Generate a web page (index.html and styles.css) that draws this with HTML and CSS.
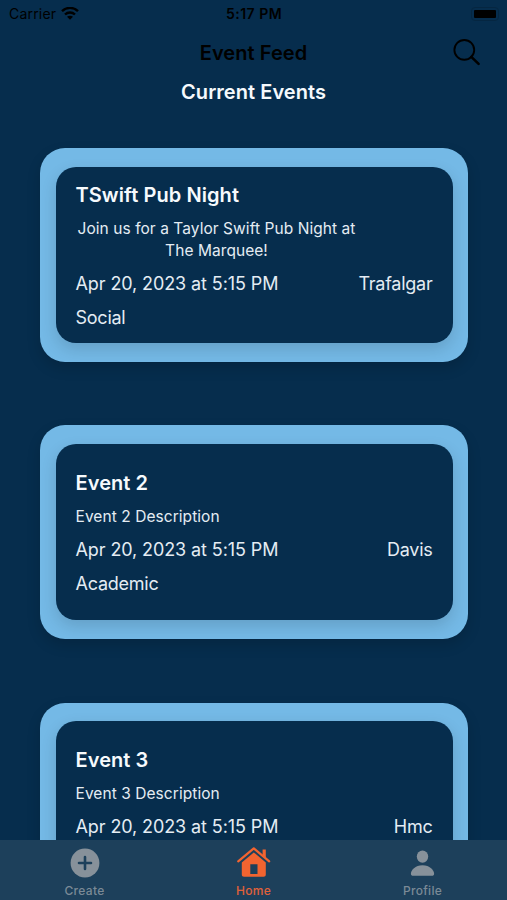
FILE: index.html
```
<!DOCTYPE html>
<html lang="en">
	<head>
		<meta charset="utf-8">
		<title>Event Feed</title>
		<link rel="stylesheet" href="styles.css">
	</head>
	<body>
		<div class="status-bar">
			<div class="carrier">
				<span>Carrier</span>
				<svg width="18" height="14" viewBox="0 0 18 14" fill="none" stroke="#000" stroke-width="2.4">
					<path d="M1 4.2C5.4 -.2 12.6 -.2 17 4.2"/>
					<path d="M4 7.5c2.8-2.7 7.200-2.7 10 0"/>
					<path d="M9 12.800l-3-3c1.700-1.500 4.300-1.500 6 0z" fill="#000" stroke="none"/>
				</svg>
			</div>
			<div class="time">5:17 PM</div>
			<div class="battery"><div class="battery-level"></div></div>
		</div>

		<header class="nav-bar">
			<h1>Event Feed</h1>
			<svg class="search" width="28" height="28" viewBox="0 0 28 28" fill="none" stroke="#000">
				<circle cx="11.3" cy="11.9" r="9.9" stroke-width="1.9"/>
				<path d="M18.3 18.9l7.3 7" stroke-width="2.6" stroke-linecap="round"/>
			</svg>
		</header>

		<h2>Current Events</h2>

		<main class="feed">
			<div class="card">
				<div class="card-inner">
					<h3>TSwift Pub Night</h3>
					<p class="description">Join us for a Taylor Swift Pub Night at The Marquee!</p>
					<div class="row">
						<span>Apr 20, 2023 at 5:15 PM</span>
						<span class="tag">Trafalgar</span>
					</div>
					<div class="row"><span class="tag">Social</span></div>
				</div>
			</div>
			<div class="card">
				<div class="card-inner">
					<h3>Event 2</h3>
					<p class="description">Event 2 Description</p>
					<div class="row">
						<span>Apr 20, 2023 at 5:15 PM</span>
						<span class="tag">Davis</span>
					</div>
					<div class="row"><span class="tag">Academic</span></div>
				</div>
			</div>
			<div class="card">
				<div class="card-inner">
					<h3>Event 3</h3>
					<p class="description">Event 3 Description</p>
					<div class="row">
						<span>Apr 20, 2023 at 5:15 PM</span>
						<span class="tag">Hmc</span>
					</div>
				</div>
			</div>
		</main>

		<nav class="tab-bar">
			<div class="tab">
				<svg width="36" height="34" viewBox="0 0 36 34">
					<circle cx="18" cy="17" r="14.4" fill="#87919a"/>
					<path d="M18 11v12M12 17h12" stroke="#1d405b" stroke-width="2.6" stroke-linecap="round"/>
				</svg>
				<span>Create</span>
			</div>
			<div class="tab tab-active">
				<svg width="36" height="34" viewBox="0 0 36 34">
					<path d="M2.2 15.4L17.8 2.4l15.400 13" fill="none" stroke="#f26430" stroke-width="2.2" stroke-linecap="round" stroke-linejoin="round"/>
					<path d="M26.6 3.6h3.200v8.400l-3.200-2.800z" fill="#f26430"/>
					<path fill-rule="evenodd" d="M17.8 6.4L5.8 16.4v12.200c0 1.400.9 2.200 2.200 2.200h19.600c1.300 0 2.200-.8 2.200-2.200v-12.200zM14.300 18.200h7.200v9.800h-7.200z" fill="#f26430"/>
				</svg>
				<span>Home</span>
			</div>
			<div class="tab">
				<svg width="36" height="34" viewBox="0 0 36 34" fill="#87919a">
					<ellipse cx="17.5" cy="10.6" rx="5.7" ry="6.1"/>
					<path d="M8.300 29.800c-1.600 0-2.400-.8-2.400-2.100 0-3.600 4.400-8.500 11.600-8.500s11.600 4.900 11.600 8.500c0 1.300-.8 2.100-2.400 2.100z"/>
				</svg>
				<span>Profile</span>
			</div>
		</nav>
	</body>
</html>
```

FILE: styles.css
```
* {
	box-sizing: border-box;
}

body {
	margin: 0;
	height: 900px;
	overflow: hidden;
	display: flex;
	flex-direction: column;
	background: #062d4d;
	color: #e4ecf3;
	font-family: 'Inter', 'Liberation Sans', sans-serif;
}

h1, h2, h3, p {
	margin: 0;
}

.status-bar {
	display: grid;
	grid-template-columns: 1fr auto 1fr;
	align-items: center;
	height: 27px;
	padding: 0 8px 0 9px;
	color: #000;
	font-size: 14px;
	flex-shrink: 0;
}

.carrier {
	display: flex;
	align-items: center;
	gap: 5px;
	letter-spacing: 0.2px;
}

.time {
	font-weight: 600;
	letter-spacing: 0.5px;
}

.battery {
	justify-self: end;
	padding: 2px;
	border: 1px solid #052641;
	border-radius: 4px;
}

.battery-level {
	width: 22px;
	height: 8px;
	border-radius: 1px;
	background: #000;
}

.nav-bar {
	display: grid;
	grid-template-columns: 1fr auto 1fr;
	align-items: center;
	height: 50px;
	flex-shrink: 0;
	padding: 0 26px;
	color: #000;
}

.nav-bar h1 {
	grid-column: 2;
	padding-top: 1px;
	font-size: 20px;
	font-weight: 600;
	letter-spacing: 0.05px;
}

.search {
	justify-self: end;
}

h2 {
	text-align: center;
	font-size: 20px;
	line-height: 30px;
	font-weight: 600;
	letter-spacing: 0.05px;
	color: #f6fafd;
}

.feed {
	display: flex;
	flex-direction: column;
	gap: 63.7px;
	padding: 41.3px 39.5px 0 40px;
	flex: 1;
	min-height: 0;
	overflow: hidden;
}

.card {
	flex-shrink: 0;
	height: 213.5px;
	padding: 18.5px 15px 18.5px 15.5px;
	border-radius: 25px;
	background: #74b9e6;
	box-shadow: 0 6px 14px rgba(0, 0, 0, 0.15);
}

.card-inner {
	display: flex;
	flex-direction: column;
	justify-content: center;
	align-items: flex-start;
	gap: 10px;
	height: 100%;
	padding: 1px 20px 0;
	border-radius: 20px;
	background: #062d4d;
	box-shadow: 0 6px 16px rgba(0, 0, 0, 0.14);
}

.card:last-child .card-inner {
	justify-content: flex-start;
	padding-top: 26px;
}

h3 {
	font-size: 20px;
	line-height: 26px;
	font-weight: 600;
	letter-spacing: 0.08px;
	color: #f6fafd;
}

.description {
	max-width: 282px;
	font-size: 15.5px;
	line-height: 22px;
	letter-spacing: 0.06px;
	text-align: center;
}

.row {
	display: flex;
	justify-content: space-between;
	align-self: stretch;
	font-size: 18px;
	line-height: 24px;
	letter-spacing: -0.1px;
}

.tag {
	letter-spacing: -0.25px;
}

.tab-bar {
	display: grid;
	grid-template-columns: repeat(3, 1fr);
	height: 60px;
	flex-shrink: 0;
	background: #1d405b;
	color: #7b8a96;
}

.tab {
	display: flex;
	flex-direction: column;
	align-items: center;
	padding-top: 6px;
	font-size: 12px;
	line-height: 22px;
	font-weight: 500;
	letter-spacing: 0.3px;
}

.tab-active {
	color: #e0613a;
}
```
